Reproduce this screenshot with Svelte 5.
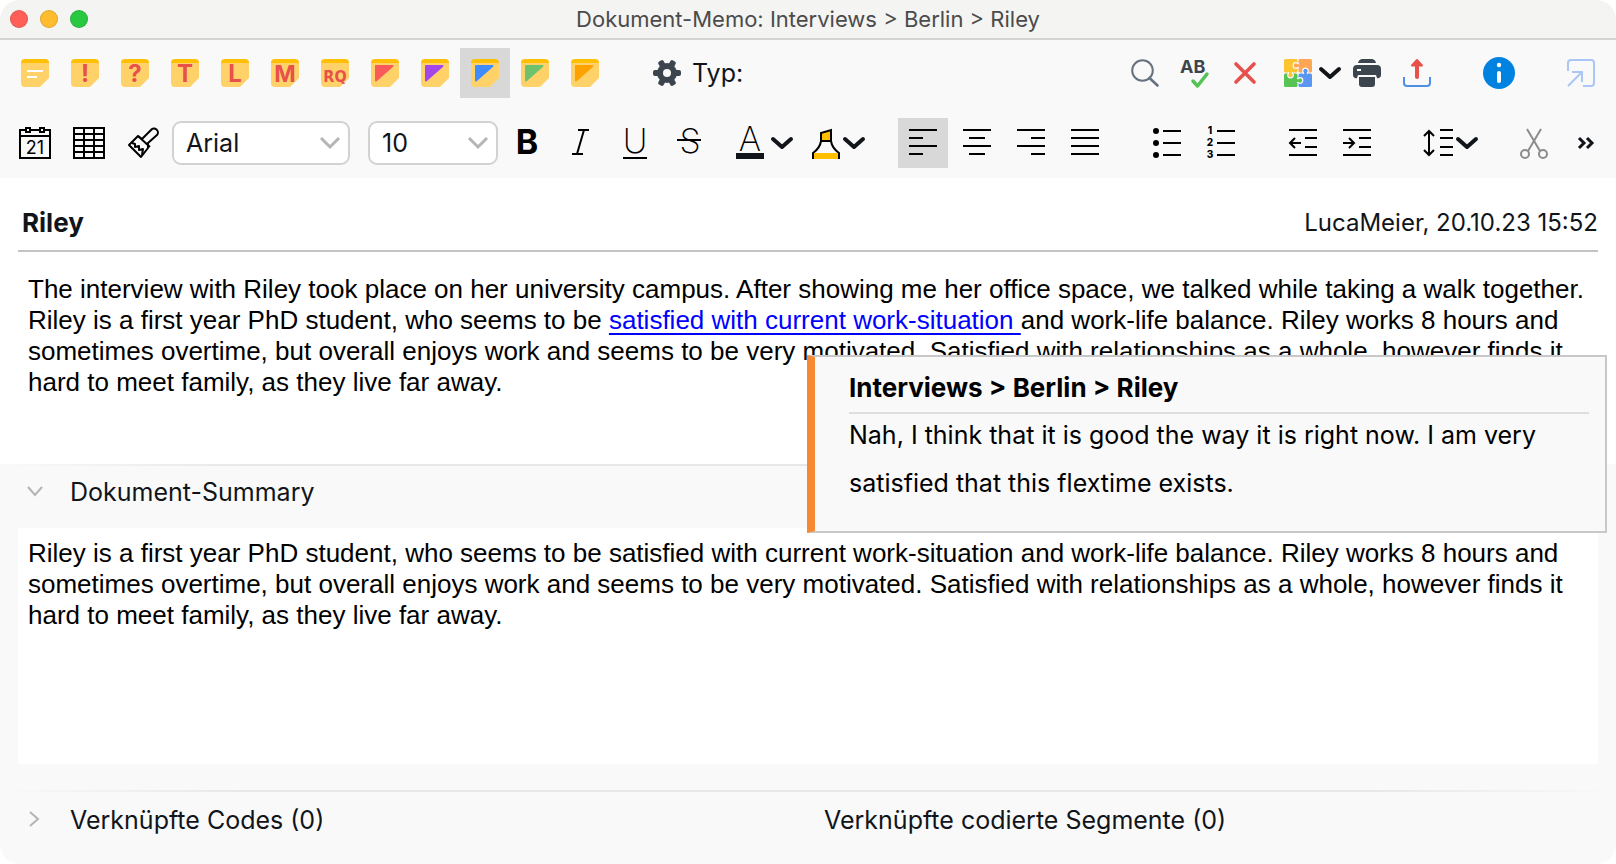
<script lang="ts">
  type Note = { name: string; letter?: string; size?: number; color?: string };

  const notes: Note[] = [
    { name: 'Standard' },
    { name: 'Wichtig', letter: '!', size: 24 },
    { name: 'Frage', letter: '?', size: 24 },
    { name: 'Theorie', letter: 'T', size: 24 },
    { name: 'Literatur', letter: 'L', size: 24 },
    { name: 'Methode', letter: 'M', size: 23 },
    { name: 'Forschungsfrage', letter: 'RQ', size: 16 },
    { name: 'Rot', color: '#fa5a5a' },
    { name: 'Violett', color: '#a347e8' },
    { name: 'Blau', color: '#3f8cff' },
    { name: 'Grün', color: '#6ec26e' },
    { name: 'Orange', color: '#ffa200' }
  ];

  const aligns = [
    { name: 'Linksbündig', d: 'M0 1h28M0 9h14M0 17h28M0 25h14' },
    { name: 'Zentriert', d: 'M0 1h28M6 9h16M0 17h28M6 25h16' },
    { name: 'Rechtsbündig', d: 'M0 1h28M14 9h14M0 17h28M14 25h14' },
    { name: 'Blocksatz', d: 'M0 1h28M0 9h28M0 17h28M0 25h28' }
  ];

  let activeNote = $state('Blau');
  let activeAlign = $state('Linksbündig');
  let font = $state('Arial');
  let fontSize = $state('10');
  let summaryOpen = $state(true);
  let codesOpen = $state(false);
  let summary = $state(
    'Riley is a first year PhD student, who seems to be satisfied with current work-situation and work-life balance. Riley works 8 hours and sometimes overtime, but overall enjoys work and seems to be very motivated. Satisfied with relationships as a whole, however finds it hard to meet family, as they live far away.'
  );
</script>

{#snippet chevron()}
  <svg class="chevron" width="24" height="14" viewBox="0 0 24 14">
    <path d="M3 3l9 8 9-8" fill="none" stroke="#11151a" stroke-width="4" stroke-linecap="round" stroke-linejoin="round" />
  </svg>
{/snippet}

{#snippet arrow(open: boolean)}
  <svg width="16" height="16" viewBox="0 0 16 16">
    <path d={open ? 'M1 3l7 8 7-8' : 'M3 0l8 7-8 7'} fill="none" stroke="#b4b4b4" stroke-width="2" />
  </svg>
{/snippet}

<div class="window">
  <header class="titlebar">
    <div class="lights">
      <button class="light close" aria-label="Schließen"></button>
      <button class="light minimize" aria-label="Minimieren"></button>
      <button class="light zoom" aria-label="Zoomen"></button>
    </div>
    <h1>Dokument-Memo: Interviews &gt; Berlin &gt; Riley</h1>
  </header>

  <div class="toolbar memo-bar">
    {#each notes as note}
      <button
        class="tool"
        class:active={activeNote === note.name}
        aria-label={note.name}
        onclick={() => (activeNote = note.name)}
      >
        <svg width="28" height="28" viewBox="0 0 28 28">
          <path d="M0 3h28v16l-9 9H4a4 4 0 0 1-4-4z" fill="#ffd269" />
          <path d="M0 4a4 4 0 0 1 4-4h20a4 4 0 0 1 4 4z" fill="#ffbf05" />
          {#if note.color}
            <path d="M5 7h16.5L5 21.5z" fill={note.color} stroke={note.color} stroke-width="2" stroke-linejoin="round" />
          {:else if note.letter}
            <text class="note-letter" class:narrow={note.letter.length > 1} x="14" y="23" font-size={note.size}>{note.letter}</text>
          {:else}
            <path d="M6 12h16M6 18h10" stroke="#fff" stroke-width="2" />
          {/if}
        </svg>
      </button>
    {/each}

    <button class="tool gear" aria-label="Einstellungen">
      <svg width="28" height="28" viewBox="-14 -14 28 28">
        <g fill="#3c454e">
          <circle r="10" />
          {#each [0, 60, 120] as angle}
            <rect x="-14" y="-3" width="28" height="6" rx="2" transform="rotate({angle})" />
          {/each}
        </g>
        <circle r="4" fill="#f9f9f9" />
      </svg>
    </button>
    <span class="type">Typ:</span>

    <div class="actions">
      <button class="tool" aria-label="Suchen">
        <svg width="28" height="28" viewBox="0 0 28 28" fill="none" stroke="#66727f" stroke-width="2">
          <circle cx="11.5" cy="11.5" r="10.3" />
          <path d="M18.5 19l8 7.5" stroke-width="2.6" stroke-linecap="round" />
        </svg>
      </button>
      <button class="tool" aria-label="Rechtschreibung">
        <svg width="30" height="30" viewBox="0 0 30 30">
          <text x="0" y="15" class="spell">AB</text>
          <path d="M13 23l4.500 5L27 16" fill="none" stroke="#54c254" stroke-width="3.500" stroke-linecap="round" stroke-linejoin="round" />
        </svg>
      </button>
      <button class="tool" aria-label="Löschen">
        <svg width="24" height="24" viewBox="0 0 24 24">
          <path d="M3 3l18 18M21 3L3 21" stroke="#e8504c" stroke-width="3.6" stroke-linecap="round" />
        </svg>
      </button>
      <button class="tool with-menu addons" aria-label="Add-ons">
        <svg width="28" height="28" viewBox="0 0 28 28">
          <rect width="13.5" height="13.5" rx="1.5" fill="#fcc430" />
          <rect x="14.5" width="13.5" height="13.5" rx="1.5" fill="#ffa654" />
          <rect y="14.5" width="13.5" height="13.5" rx="1.5" fill="#57c353" />
          <rect x="14.5" y="14.5" width="13.5" height="13.5" rx="1.5" fill="#5b96f3" />
          <g stroke="#f9f9f9" stroke-width="1.2">
            <path d="M15 4.500c-1.500.5-1.800-.8-3-.8a2.800 2.800 0 0 0 0 5.600c1.200 0 1.500-1.300 3-.8" fill="#ffa654" />
            <path d="M4.500 13c.5 1.500-.8 1.800-.8 3a2.800 2.800 0 0 0 5.600 0c0-1.200-1.300-1.500-.8-3" fill="#fcc430" />
            <path d="M19.500 15c.5-1.500-.8-1.800-.8-3a2.800 2.800 0 0 1 5.600 0c0 1.200-1.300 1.500-.8 3" fill="#5b96f3" />
            <path d="M13 19.500c1.500.5 1.800-.8 3-.8a2.800 2.800 0 0 1 0 5.600c-1.200 0-1.500-1.300-3-.8" fill="#57c353" />
          </g>
        </svg>
        {@render chevron()}
      </button>
      <button class="tool" aria-label="Drucken">
        <svg width="28" height="28" viewBox="0 0 28 28" fill="#3c454e">
          <path d="M5 4a5 5 0 0 1 4-4h10a5 5 0 0 1 4 4z" />
          <path d="M4 6h20a4 4 0 0 1 4 4v6a3 3 0 0 1-4 3l-1-3H5l-1 3a3 3 0 0 1-4-3v-6a4 4 0 0 1 4-4z" />
          <path d="M6 18h16v7a3 3 0 0 1-3 3H9a3 3 0 0 1-3-3z" />
          <path d="M4 11h4" stroke="#fff" stroke-width="2" />
        </svg>
      </button>
      <button class="tool" aria-label="Exportieren">
        <svg width="28" height="28" viewBox="0 0 28 28">
          <path d="M1 18v6a3 3 0 0 0 3 3h20a3 3 0 0 0 3-3v-6" fill="none" stroke="#4f8fe8" stroke-width="2" />
          <path d="M14 18V5" stroke="#e8504c" stroke-width="4" stroke-linecap="round" />
          <path d="M9 6.5L14 1l5 5.500z" fill="#e8504c" stroke="#e8504c" stroke-width="2" stroke-linejoin="round" />
        </svg>
      </button>
      <button class="tool info" aria-label="Info">
        <svg width="32" height="32" viewBox="0 0 32 32">
          <circle cx="16" cy="16" r="16" fill="#0083e0" />
          <circle cx="16" cy="8" r="2.2" fill="#fff" />
          <path d="M16 16v8" stroke="#fff" stroke-width="4" stroke-linecap="round" />
        </svg>
      </button>
      <button class="tool info" aria-label="Abdocken">
        <svg width="28" height="28" viewBox="0 0 28 28" fill="none" stroke="#a9c6f5" stroke-width="2">
          <path d="M1 12V4a3 3 0 0 1 3-3h20a3 3 0 0 1 3 3v20a3 3 0 0 1-3 3h-8" />
          <path d="M1 27l14-14M5 13h10v10" />
        </svg>
      </button>
    </div>
  </div>

  <div class="toolbar format-bar">
    <button class="tool" aria-label="Datum">
      <svg width="32" height="32" viewBox="0 0 32 32">
        <path d="M1 3h30v28H1zM1 9h30" fill="none" stroke="#000" stroke-width="2" />
        <path d="M7 1h4v4H7zM21 1h4v4h-4z" fill="#fff" stroke="#000" stroke-width="2" />
        <text x="16" y="27" text-anchor="middle" class="day">21</text>
      </svg>
    </button>
    <button class="tool" aria-label="Tabelle">
      <svg width="32" height="32" viewBox="0 0 32 32">
        <path d="M1 1h30v30H1zM1 7h30M1 13h30M1 19h30M1 25h30M11 1v30M21 1v30" fill="none" stroke="#000" stroke-width="2" />
      </svg>
    </button>
    <button class="tool" aria-label="Format übertragen">
      <svg width="32" height="32" viewBox="0 0 32 32" fill="none" stroke="#000" stroke-width="2" stroke-linejoin="round">
        <path d="M2 18l9-9 4 3 9-9a3.600 3.600 0 0 1 6 5l-9 8v5l-7 9z" />
        <path d="M11 9l12 11M5 16l3 1v3l4-1v4l4-1-1 6" />
      </svg>
    </button>

    <label class="dropdown font">
      <select aria-label="Schriftart" bind:value={font}>
        <option>Arial</option>
        <option>Times New Roman</option>
      </select>
      <svg width="20" height="12" viewBox="0 0 20 12">
        <path d="M1 1l9 9 9-9" fill="none" stroke="#b4b4b4" stroke-width="3" />
      </svg>
    </label>
    <label class="dropdown size">
      <select aria-label="Schriftgröße" bind:value={fontSize}>
        <option>10</option>
        <option>12</option>
      </select>
      <svg width="20" height="12" viewBox="0 0 20 12">
        <path d="M1 1l9 9 9-9" fill="none" stroke="#b4b4b4" stroke-width="3" />
      </svg>
    </label>

    <button class="tool" aria-label="Fett">
      <svg width="28" height="34" viewBox="0 0 28 34"><text x="14" y="28" class="glyph bold">B</text></svg>
    </button>
    <button class="tool" aria-label="Kursiv">
      <svg width="28" height="34" viewBox="0 0 28 34">
        <path d="M11 4h11M5 28h11M17 4l-7 24" stroke="#000" stroke-width="2" />
      </svg>
    </button>
    <button class="tool" aria-label="Unterstrichen">
      <svg width="28" height="34" viewBox="0 0 28 34">
        <text x="14" y="27" class="glyph">U</text>
        <path d="M2 32h24" stroke="#000" stroke-width="2" />
      </svg>
    </button>
    <button class="tool" aria-label="Durchgestrichen">
      <svg width="28" height="34" viewBox="0 0 28 34">
        <text x="15" y="27" class="glyph">S</text>
        <path d="M2 14h24" stroke="#000" stroke-width="2" />
      </svg>
    </button>
    <button class="tool with-menu color" aria-label="Textfarbe">
      <svg width="28" height="34" viewBox="0 0 28 34">
        <text x="14" y="25" class="glyph">A</text>
        <path d="M0 30h28" stroke="#11151a" stroke-width="6" />
      </svg>
      {@render chevron()}
    </button>
    <button class="tool with-menu marker" aria-label="Hervorheben">
      <svg width="28" height="32" viewBox="0 0 28 32">
        <path d="M9 14V6l10-3v11z" fill="#fdbf00" stroke="#000" stroke-width="2" />
        <path d="M9 14q-1 7-8 12v6M19 14q1 7 8 12v6M9 14h10" fill="none" stroke="#000" stroke-width="2" />
        <path d="M2 26h24v6H2z" fill="#fdbf00" />
      </svg>
      {@render chevron()}
    </button>

    <div class="group">
      {#each aligns as align}
        <button
          class="tool"
          class:active={activeAlign === align.name}
          aria-label={align.name}
          onclick={() => (activeAlign = align.name)}
        >
          <svg width="28" height="28" viewBox="0 0 28 28"><path d={align.d} stroke="#000" stroke-width="2" /></svg>
        </button>
      {/each}
    </div>
    <div class="group">
      <button class="tool" aria-label="Aufzählung">
        <svg width="28" height="32" viewBox="0 0 28 32">
          {#each [4, 16, 28] as y}
            <circle cx="3" cy={y} r="3" />
            <path d="M10 {y}h18" stroke="#000" stroke-width="2" />
          {/each}
        </svg>
      </button>
      <button class="tool" aria-label="Nummerierung">
        <svg width="28" height="32" viewBox="0 0 28 32">
          {#each [4, 16, 28] as y, i}
            <text x="3" y={y + 3} text-anchor="middle" class="number">{i + 1}</text>
            <path d="M10 {y}h18" stroke="#000" stroke-width="2" />
          {/each}
        </svg>
      </button>
    </div>
    <div class="group">
      <button class="tool" aria-label="Einzug verkleinern">
        <svg width="28" height="28" viewBox="0 0 28 28" fill="none" stroke="#000" stroke-width="2">
          <path d="M0 1h28M16 9h12M16 18h12M0 26h28M1 14h11M6 9l-5 5 5 5" />
        </svg>
      </button>
      <button class="tool" aria-label="Einzug vergrößern">
        <svg width="28" height="28" viewBox="0 0 28 28" fill="none" stroke="#000" stroke-width="2">
          <path d="M0 1h28M16 9h12M16 18h12M0 26h28M0 14h11M6 9l5 5-5 5" />
        </svg>
      </button>
    </div>
    <button class="tool with-menu spacing" aria-label="Zeilenabstand">
      <svg width="30" height="28" viewBox="0 0 30 28" fill="none" stroke="#000" stroke-width="2">
        <path d="M6 2v24M1 7l5-5 5 5M1 21l5 5 5-5M17 1h13M17 9h13M17 18h13M17 26h13" />
      </svg>
      {@render chevron()}
    </button>
    <button class="tool cut" aria-label="Ausschneiden">
      <svg width="28" height="32" viewBox="0 0 28 32" fill="none" stroke="#8c8c8c" stroke-width="2">
        <circle cx="5" cy="27" r="4" />
        <circle cx="23" cy="27" r="4" />
        <path d="M7 2l13 22M21 2L8 24" />
      </svg>
    </button>
    <button class="more" aria-label="Mehr">
      <svg width="16" height="12" viewBox="0 0 16 12">
        <path d="M1 1l5 5-5 5M9 1l5 5-5 5" fill="none" stroke="#11151a" stroke-width="3" />
      </svg>
    </button>
  </div>

  <main class="memo">
    <div class="memo-head">
      <h2>Riley</h2>
      <span>LucaMeier, 20.10.23 15:52</span>
    </div>
    <p class="memo-text">
      The interview with Riley took place on her university campus. After showing me her office space, we talked while taking a walk together. Riley is a first year PhD student, who seems to be <a href="#segment">satisfied with current work-situation{' '}</a>and work-life balance. Riley works 8 hours and sometimes overtime, but overall enjoys work and seems to be very motivated. Satisfied with relationships as a whole, however finds it hard to meet family, as they live far away.
    </p>

    <aside class="preview">
      <h3>Interviews &gt; Berlin &gt; Riley</h3>
      <p>Nah, I think that it is good the way it is right now. I am very satisfied that this flextime exists.</p>
    </aside>
  </main>

  <section class="summary">
    <div class="divider"></div>
    <button class="section-title" aria-expanded={summaryOpen} onclick={() => (summaryOpen = !summaryOpen)}>
      {@render arrow(summaryOpen)}
      Dokument-Summary
    </button>
    {#if summaryOpen}
      <textarea aria-label="Dokument-Summary" spellcheck="false" bind:value={summary}></textarea>
    {/if}
  </section>

  <footer>
    <div class="divider"></div>
    <div class="links">
      <button class="section-title" aria-expanded={codesOpen} onclick={() => (codesOpen = !codesOpen)}>
        {@render arrow(codesOpen)}
        Verknüpfte Codes (0)
      </button>
      <span>Verknüpfte codierte Segmente (0)</span>
    </div>
  </footer>
</div>

<style>
  :global(body) {
    background: #fff;
  }

  .window {
    display: flex;
    flex-direction: column;
    min-height: 100vh;
    box-sizing: border-box;
    overflow: hidden;
    border-radius: 20px;
    background: #f9f9f9;
    color: #11151a;
    font-family: Inter, 'Liberation Sans', sans-serif;
    font-size: 25px;
  }

  h1,
  h2,
  h3,
  p {
    margin: 0;
  }

  button {
    border: none;
    padding: 0;
    background: none;
    color: inherit;
    font: inherit;
  }

  svg {
    display: block;
    flex: none;
    overflow: visible;
  }

  .titlebar {
    display: grid;
    grid-template-columns: 1fr auto 1fr;
    align-items: center;
    height: 38px;
    padding: 0 10px;
    border-bottom: 2px solid #d4d4d4;
    background: #f4f4f2;
  }

  .titlebar h1 {
    font-size: 22px;
    font-weight: 400;
    color: #4b4b4b;
  }

  .lights {
    display: flex;
    gap: 12px;
  }

  .light {
    width: 18px;
    height: 18px;
    border: 1px solid rgba(0, 0, 0, 0.12);
    border-radius: 50%;
  }

  .close {
    background: #ff5f57;
  }

  .minimize {
    background: #febc2e;
  }

  .zoom {
    background: #28c840;
  }

  .toolbar {
    display: flex;
    align-items: center;
    box-sizing: border-box;
    padding: 0 10px;
  }

  .memo-bar {
    height: 66px;
  }

  .format-bar {
    height: 72px;
    gap: 4px;
    padding: 2px 22px 0 10px;
  }

  .tool {
    display: flex;
    flex: none;
    align-items: center;
    justify-content: center;
    width: 50px;
    height: 50px;
  }

  .tool.active {
    background: #d8d8d8;
  }

  .note-letter {
    fill: #e8504c;
    font-family: Inter, sans-serif;
    font-weight: 700;
    text-anchor: middle;
  }

  .note-letter.narrow {
    font-family: 'Liberation Sans Narrow', 'DejaVu Sans Condensed', sans-serif;
  }

  .spell {
    fill: #3c454e;
    font-size: 18px;
    font-weight: 700;
  }

  .day {
    font-size: 18px;
  }

  .number {
    font-size: 10px;
    font-weight: 800;
  }

  .glyph {
    font-size: 34px;
    font-weight: 200;
    text-anchor: middle;
  }

  .glyph.bold {
    font-weight: 700;
  }

  .gear {
    margin-left: 32px;
  }

  .actions {
    display: flex;
    margin-left: auto;
  }

  .with-menu {
    gap: 6px;
    width: auto;
    padding-left: 11px;
  }

  .addons {
    padding-left: 14px;
  }

  .info {
    margin-left: 32px;
  }

  .dropdown {
    display: grid;
    align-items: center;
  }

  .dropdown select,
  .dropdown svg {
    grid-area: 1 / 1;
  }

  .dropdown svg {
    justify-self: end;
    margin-right: 10px;
    pointer-events: none;
  }

  .dropdown select {
    width: 100%;
    height: 44px;
    padding: 0 12px;
    border: 2px solid #d2d2d2;
    border-radius: 9px;
    background: #fff;
    color: inherit;
    font: inherit;
    appearance: none;
  }

  .font {
    width: 178px;
  }

  .size {
    width: 130px;
    margin-left: 14px;
  }

  .color {
    padding-left: 18px;
  }

  .marker {
    gap: 2px;
    padding-left: 14px;
  }

  .group {
    display: flex;
    gap: 4px;
    margin-left: 28px;
  }

  .spacing {
    gap: 2px;
    margin-left: 26px;
  }

  .cut {
    margin-left: 26px;
  }

  .more {
    margin-left: auto;
  }

  .memo {
    position: relative;
    height: 286px;
    padding: 0 18px;
    box-sizing: border-box;
    background: #fff;
  }

  .memo-head {
    display: flex;
    align-items: center;
    justify-content: space-between;
    height: 72px;
    padding: 16px 0 0 4px;
    box-sizing: border-box;
  }

  .memo-head h2,
  .preview h3 {
    font-size: 26px;
    font-weight: 700;
  }

  .memo-head span {
    font-size: 24px;
  }

  .memo-text,
  textarea {
    color: #000;
    font-family: 'Liberation Sans', Arial, sans-serif;
    font-size: 26px;
    line-height: 31px;
  }

  .memo-text {
    padding: 22px 10px 0;
    border-top: 2px solid #c4c4c4;
  }

  .memo-text a {
    color: #00f;
    text-decoration-thickness: 2px;
    text-underline-offset: 4px;
  }

  .preview {
    position: absolute;
    top: 177px;
    right: 9px;
    left: calc(50% - 1px);
    z-index: 1;
    height: 178px;
    box-sizing: border-box;
    padding: 6px 16px 0 34px;
    border: 2px solid #c8c8c8;
    border-left: 8px solid #f58a33;
    background: #f9f9f9;
    color: #000;
  }

  .preview h3 {
    padding: 6px 0 5px;
    border-bottom: 2px solid #dedede;
    line-height: 38px;
  }

  .preview p {
    margin-top: -3px;
    line-height: 48px;
  }

  .summary {
    display: flex;
    flex: 1;
    flex-direction: column;
    padding-bottom: 26px;
  }

  .divider {
    height: 2px;
    background: linear-gradient(to right, #f9f9f9, #e8e8e8 15%, #e8e8e8 85%, #f9f9f9);
  }

  .section-title {
    display: flex;
    align-items: center;
    gap: 27px;
    padding-left: 27px;
    text-align: left;
  }

  .summary .section-title {
    height: 52px;
    margin-bottom: 10px;
  }

  textarea {
    flex: 1;
    margin: 0 18px;
    padding: 10px;
    border: none;
    background: #fff;
    resize: none;
    outline: none;
  }

  .links {
    display: grid;
    grid-template-columns: 1fr 1fr;
    align-items: center;
    height: 56px;
    padding-bottom: 16px;
  }

  .links span {
    padding-left: 16px;
  }
</style>
